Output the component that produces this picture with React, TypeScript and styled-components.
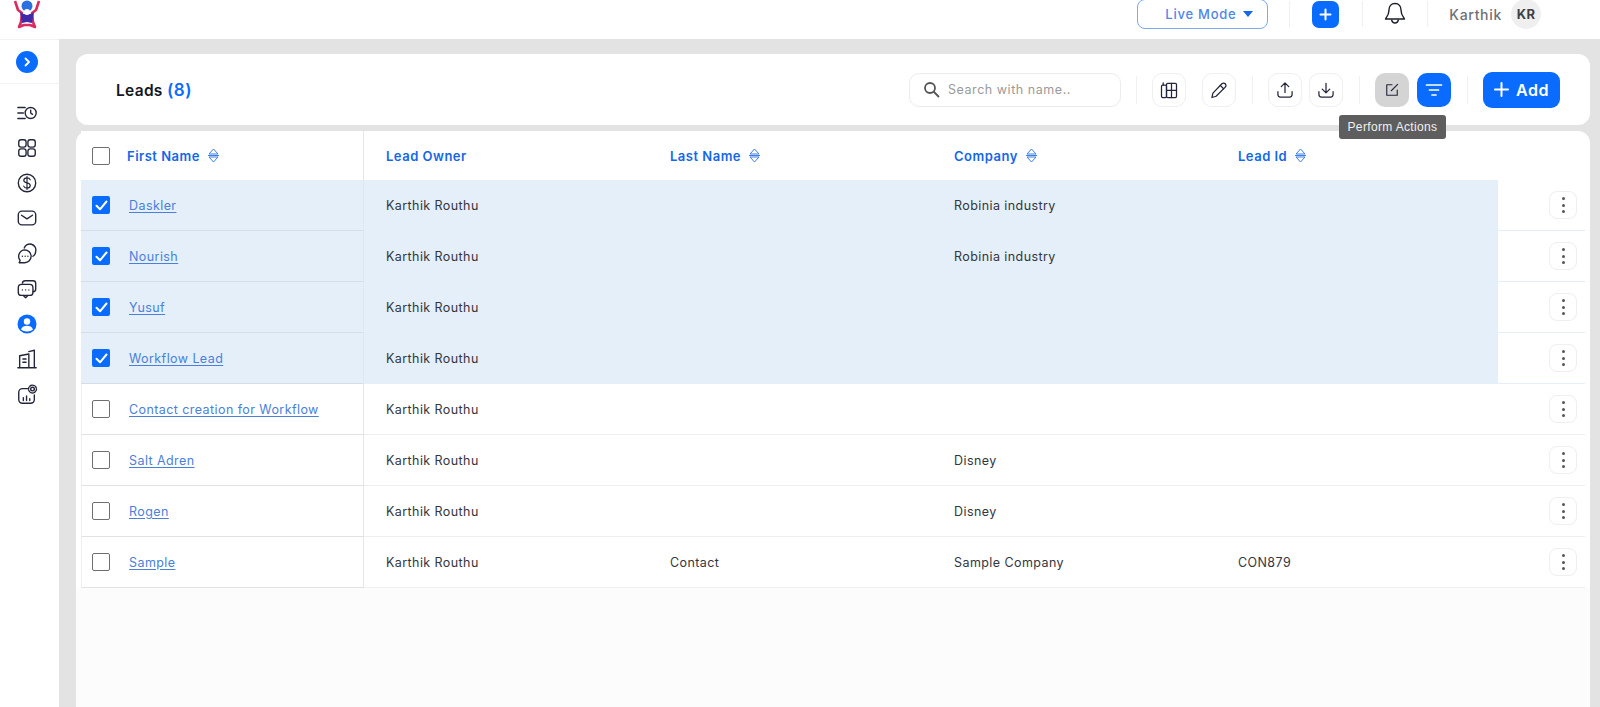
import React from "react";
import styled, { createGlobalStyle } from "styled-components";

const Global = createGlobalStyle`
  html, body { margin: 0; padding: 0; height: 100%; background: #e3e3e3; overflow: hidden; }
  #root { height: 100%; }
  * { box-sizing: border-box; }
  body { font-family: Inter, "Open Sans", sans-serif; }
`;

const Page = styled.div`height: 707px; display: flex; flex-direction: column; overflow: hidden;`;
const TopBar = styled.header`
  height: 39px; flex: none; background: #fff; display: flex; align-items: flex-start;
  padding-right: 59px; overflow: hidden;
`;
const LogoBox = styled.div`width: 59px; height: 28px; display: flex; justify-content: center; padding-right: 5px; margin-top: -1px;`;
const TopRight = styled.div`margin-left: auto; height: 28px; display: flex; align-items: center;`;
const ModeButton = styled.button`
  width: 131px; height: 30px; border: 1px solid #7ea8ef; border-radius: 8px; background: #fff; color: #4f86ea;
  display: flex; align-items: center; font: 500 13px Inter, sans-serif; letter-spacing: .75px; padding: 0 14px 0 27px; justify-content: space-between;
`;
const Caret = styled.span`width: 0; height: 0; border: 5px solid transparent; border-top: 6px solid #1467e8; border-bottom: 0;`;
const TopDivider = styled.span<{ $l: number; $r: number }>`width: 1px; height: 26px; background: #f0f0f0; margin: 0 ${p => p.$r}px 0 ${p => p.$l}px;`;
const SquarePlus = styled.button`
  width: 27px; height: 27px; border: 0; border-radius: 7px; background: #0a6cff; color: #fff; display: flex; align-items: center; justify-content: center; padding: 0;
`;
const UserName = styled.span`font-size: 14px; font-weight: 500; color: #6e7079; letter-spacing: .7px;`;
const Avatar = styled.span`
  width: 30px; height: 30px; border-radius: 50%; background: #efefef; color: #3f3f46; font-size: 13px; font-weight: 700; letter-spacing: .4px;
  display: flex; align-items: center; justify-content: center; margin-left: 9px;
`;
const Body = styled.div`flex: 1; display: flex; min-height: 0;`;
const Side = styled.aside`width: 59px; flex: none; background: #fff; display: flex; flex-direction: column; align-items: stretch; padding-right: 5px; border-top: 1px solid #f2f2f2;`;
const ToggleArea = styled.div`height: 44px; margin-right: -5px; padding-right: 5px; display: flex; align-items: center; justify-content: center; border-bottom: 1px solid #f3f3f3; padding-top: 1px;`;
const Toggle = styled.button`width: 22px; height: 22px; border: 0; padding: 0; border-radius: 50%; background: #0a6cff; display: flex; align-items: center; justify-content: center;`;
const SideNav = styled.nav`display: flex; flex-direction: column; align-items: center; padding-top: 11px;`;
const NavItem = styled.span`height: 35.25px; display: flex; align-items: center; justify-content: center;`;
const Main = styled.main`flex: 1; min-width: 0; padding: 15px 10px 0 17px; display: flex; flex-direction: column; gap: 6px;`;
const HeaderCard = styled.section`
  height: 71px; flex: none; background: #fff; border-radius: 12px; display: flex; align-items: center; padding: 0 30px 0 40px; position: relative;
`;
const Title = styled.h1`margin: 0; font-size: 15.5px; font-weight: 600; color: #14171f; letter-spacing: .3px;`;
const Count = styled.span`color: #0a6cff; font-size: 17px; letter-spacing: .6px;`;
const Tools = styled.div`margin-left: auto; display: flex; align-items: center;`;
const Search = styled.div`
  width: 212px; height: 34px; border: 1px solid #ececec; border-radius: 10px; display: flex; align-items: center; gap: 8px; padding-left: 13px;
  color: #9a9a9a; font-size: 12.5px; letter-spacing: .55px;
`;
const ToolDivider = styled.span<{ $l: number; $r: number }>`width: 1px; height: 28px; background: #f1f1f1; margin: 0 ${p => p.$r}px 0 ${p => p.$l}px;`;
const IconBtn = styled.button<{ $kind?: "gray" | "blue"; $gap?: number }>`
  width: 34px; height: 34px; padding: 0; border-radius: 10px; display: flex; align-items: center; justify-content: center;
  margin-right: ${p => p.$gap ?? 0}px;
  border: 1px solid ${p => (p.$kind ? "transparent" : "#efefef")};
  background: ${p => (p.$kind === "gray" ? "#d4d4d4" : p.$kind === "blue" ? "#0a6cff" : "#fff")};
`;
const AddBtn = styled.button`
  width: 77px; height: 36px; border: 0; border-radius: 9px; background: #0a6cff; color: #fff; font: 600 16px Inter, sans-serif; letter-spacing: .6px;
  display: flex; align-items: center; justify-content: center; gap: 7px; padding: 0;
`;
const Tip = styled.div`
  position: absolute; left: 1263px; top: 61px; width: 107px; height: 24px; border-radius: 3px; background: #5e5e5e; color: #f1f1f1;
  font: 12px "Liberation Sans", sans-serif; letter-spacing: .35px; display: flex; align-items: center; justify-content: center; z-index: 2;
`;
const TableCard = styled.section`flex: 1; background: #fff; border-radius: 12px 12px 0 0; display: flex; flex-direction: column; min-height: 0;`;
const HeadRow = styled.div`height: 49px; display: flex; align-items: stretch; padding-left: 5px;`;
const Row = styled.div<{ $sel?: boolean }>`
  height: 51px; display: flex; align-items: stretch; margin-left: 5px; margin-right: 5px; position: relative;
`;
const FirstCell = styled.div<{ $sel?: boolean; $head?: boolean }>`
  width: 283px; flex: none; display: flex; align-items: center; padding-left: 11px;
  border-right: 1px solid ${p => (p.$sel ? "#dfe8f0" : "#e6e6e6")};
  background: ${p => (p.$sel ? "#e4eff9" : "#fff")};
  border-bottom: ${p => (p.$head ? "0" : `1px solid ${p.$sel ? "#d3dee8" : "#e2e2e2"}`)};
  border-left: ${p => (p.$sel || p.$head ? "0" : "1px solid #f0f0f0")};
  ${p => (!p.$sel && !p.$head ? "padding-left: 10px;" : "")}
`;
const Rest = styled.div<{ $sel?: boolean }>`
  flex: 1; display: flex; align-items: center; position: relative;
  border-bottom: 1px solid ${p => (p.$sel ? "#e4eff9" : "#efefef")};
`;
const Band = styled.div`position: absolute; left: 0; top: 0; bottom: -1px; width: 1134px; background: #e4eff9;`;
const Col = styled.div`width: 284px; flex: none; padding-left: 22px; position: relative; font-size: 12.5px; color: #33363d; letter-spacing: .42px; white-space: nowrap;`;
const HeadCol = styled(Col)`
  display: flex; align-items: center; gap: 8px; color: #1467e8; font-weight: 600; font-size: 13px; letter-spacing: .5px;
`;
const HeadText = styled.span`color: #1467e8; font-weight: 600; font-size: 13px; letter-spacing: .5px; margin-left: 17px; margin-right: 8px;`;
const Box = styled.span<{ $on?: boolean }>`
  width: 18px; height: 18px; flex: none; border-radius: 2px; display: flex; align-items: center; justify-content: center;
  border: ${p => (p.$on ? "0" : "1.5px solid #6f6f6f")}; background: ${p => (p.$on ? "#0a6cff" : "#fff")};
`;
const NameLink = styled.a`margin-left: 19px; color: #4a80dc; font-size: 12.5px; letter-spacing: .42px; text-decoration: underline; text-underline-offset: 2px; white-space: nowrap;`;
const Kebab = styled.button`
  position: absolute; right: 8px; top: 11px; width: 28px; height: 28px; padding: 0; background: #fff; border: 1px solid #efefef; border-radius: 8px;
  display: flex; flex-direction: column; align-items: center; justify-content: center; gap: 3.5px;
`;
const Dot = styled.i`width: 3px; height: 3px; border-radius: 50%; background: #55555c; display: block;`;
const Empty = styled.div`flex: 1; background: #fcfcfc;`;

const S = { fill: "none", stroke: "#23263a", strokeWidth: 1.5, strokeLinecap: "round" as const, strokeLinejoin: "round" as const };

const Logo = () => (
  <svg width="30" height="30" viewBox="0 0 30 30">
    <path d="M3 2l3 9 4 3-1 9-2 5 5-2h6l5 2-2-5-1-9 4-3 3-9" fill="none" stroke="#d92b5f" strokeWidth="2.6" strokeLinejoin="round" />
    <path d="M8 13l3 2h8l3-2-2 11-5-1-5 1z" fill="#3f2aa8" />
    <circle cx="15" cy="7" r="5.5" fill="#2b6fe0" />
    <circle cx="15" cy="13" r="3" fill="#fff" />
  </svg>
);
const I = ({ children, s = 22, v = 24 }: { children: React.ReactNode; s?: number; v?: number }) => (
  <svg width={s} height={s} viewBox={`0 0 ${v} ${v}`} {...S}>{children}</svg>
);
const NavIcons = [
  <I key="a"><path d="M2 6h8M2 12h6M2 18h8" /><circle cx="16" cy="12" r="6" /><path d="M16 9v3l2 1.5" /></I>,
  <I key="b"><rect x="3" y="3" width="8" height="8" rx="2.5" /><rect x="13" y="3" width="8" height="8" rx="2.5" /><rect x="3" y="13" width="8" height="8" rx="2.5" /><rect x="13" y="13" width="8" height="8" rx="2.5" /></I>,
  <I key="c"><circle cx="12" cy="12" r="9.5" /><path d="M15.5 8.5c-.5-1.2-2-2-3.5-2-2 0-3.5 1-3.5 2.7 0 3.6 7 1.8 7 5.4 0 1.7-1.6 2.9-3.5 2.9-1.7 0-3.1-.8-3.6-2.1M12 5v14" strokeWidth="1.3" /></I>,
  <I key="d"><rect x="2.5" y="4.5" width="19" height="15" rx="4" /><path d="M6 9l6 4 6-4" /></I>,
  <I key="e"><path d="M9 5.5A6.5 6.5 0 0 1 21.5 9a6.5 6.5 0 0 1-3 5.5" /><path d="M9.5 7.5a7 7 0 0 1 0 14H3.5l1-2.6A7 7 0 0 1 9.5 7.500z" /><path d="M7 14.500h.01M10 14.500h.01M13 14.500h.01" /></I>,
  <I key="f"><path d="M7 5.500A3 3 0 0 1 10 3h8.500a3 3 0 0 1 3 3v6a3 3 0 0 1-3 3" /><rect x="2.500" y="7" width="16" height="12" rx="3.500" /><path d="M8 19l2.500 2.500 2.500-2.500M7 13h.01M10.500 13h.01M14 13h.01" /></I>,
  <svg key="g" width="20" height="20" viewBox="0 0 20 20"><circle cx="10" cy="10" r="9.500" fill="#0a6cff" /><circle cx="10" cy="7.500" r="3.200" fill="#fff" /><path d="M4 15.500c1-2.800 3.300-3.800 6-3.800s5 1 6 3.800c-3 2.500-9 2.500-12 0z" fill="#fff" /></svg>,
  <I key="h"><path d="M2 21.500h20M4 21V8.500l10-2V21M14 4l6-1.500V21" /><path d="M7.500 12h3.500M7.500 15.500h3.500" /></I>,
  <I key="i"><path d="M13 5H7a4 4 0 0 0-4 4v8a4 4 0 0 0 4 4h9a4 4 0 0 0 4-4v-5" /><path d="M8 18v-3M11.500 18v-5M15 18v-2" /><circle cx="18" cy="5.500" r="2" /><circle cx="18" cy="5.500" r="4.300" strokeDasharray="2 1.300" /></I>,
];
const Check = () => (
  <svg width="13" height="11" viewBox="0 0 13 11"><path d="M1.500 5.800l3.500 3.500 6.500-7.800" fill="none" stroke="#fff" strokeWidth="2" strokeLinecap="round" strokeLinejoin="round" /></svg>
);
const Sort = () => (
  <svg width="11" height="15" viewBox="0 0 11 15" fill="none" stroke="#3f7fe6" strokeWidth="1"><path d="M1 6l4.500-5L10 6zM1 9l4.500 5L10 9z" strokeLinejoin="round" /><path d="M0 7.500h11" /></svg>
);
const rows = [
  { n: "Daskler", c: "Robinia industry", sel: true },
  { n: "Nourish", c: "Robinia industry", sel: true },
  { n: "Yusuf", sel: true },
  { n: "Workflow Lead", sel: true },
  { n: "Contact creation for Workflow" },
  { n: "Salt Adren", c: "Disney" },
  { n: "Rogen", c: "Disney" },
  { n: "Sample", l: "Contact", c: "Sample Company", id: "CON879" },
] as { n: string; l?: string; c?: string; id?: string; sel?: boolean }[];

export default function App() {
  return (
    <Page>
      <Global />
      <TopBar>
        <LogoBox><Logo /></LogoBox>
        <TopRight>
          <ModeButton>Live Mode<Caret /></ModeButton>
          <TopDivider $l={21} $r={22} />
          <SquarePlus><svg width="13" height="13" viewBox="0 0 13 13"><path d="M6.500 1.500v10M1.500 6.500h10" stroke="#fff" strokeWidth="2" strokeLinecap="round" /></svg></SquarePlus>
          <TopDivider $l={23} $r={21} />
          <svg width="22" height="24" viewBox="0 0 22 24" fill="none" stroke="#1e2029" strokeWidth="1.400" strokeLinejoin="round"><path d="M11 1.500c-4 0-6 3-6 6.500 0 5-2.500 7-3.500 9h19c-1-2-3.500-4-3.500-9 0-3.500-2-6.500-6-6.500z" /><path d="M7.500 17.500c.5 2.500 2 3.500 3.500 3.500s3-1 3.500-3.500" /></svg>
          <TopDivider $l={21} $r={21} />
          <UserName>Karthik</UserName>
          <Avatar>KR</Avatar>
        </TopRight>
      </TopBar>
      <Body>
        <Side>
          <ToggleArea><Toggle><svg width="10" height="10" viewBox="0 0 10 10"><path d="M3.500 1.500L7 5 3.500 8.500" fill="none" stroke="#fff" strokeWidth="1.800" strokeLinecap="round" strokeLinejoin="round" /></svg></Toggle></ToggleArea>
          <SideNav>{NavIcons.map((ic, i) => <NavItem key={i}>{ic}</NavItem>)}</SideNav>
        </Side>
        <Main>
          <HeaderCard>
            <Title>Leads <Count>(8)</Count></Title>
            <Tools>
              <Search>
                <svg width="17" height="17" viewBox="0 0 17 17" fill="none" stroke="#555" strokeWidth="1.800" strokeLinecap="round"><circle cx="7" cy="7" r="5" /><path d="M11 11l4.500 4.500" /></svg>
                Search with name..
              </Search>
              <ToolDivider $l={15} $r={15} />
              <IconBtn $gap={16}><I s={20}><rect x="3" y="6" width="6" height="15" rx="1.500" /><rect x="9" y="4" width="12" height="17" rx="1.500" /><path d="M15 4v17M9 12.500h12M5 6V3.500" /></I></IconBtn>
              <IconBtn><I s={20}><path d="M15.500 4.500a2.800 2.800 0 0 1 4 4L8.500 19.500 3.500 21l1.200-5.200z" /><path d="M13.500 6.500l4 4" /></I></IconBtn>
              <ToolDivider $l={16} $r={15} />
              <IconBtn $gap={7}><I s={20}><path d="M12 15V4M7.500 8L12 3.500 16.500 8M3.500 14v3.500a3 3 0 0 0 3 3h11a3 3 0 0 0 3-3V14" /></I></IconBtn>
              <IconBtn><I s={20}><path d="M12 4v11M7.500 11l4.500 4.500L16.500 11M3.500 14v3.500a3 3 0 0 0 3 3h11a3 3 0 0 0 3-3V14" /></I></IconBtn>
              <ToolDivider $l={16} $r={15} />
              <IconBtn $kind="gray" $gap={8}><I s={18}><path d="M12 5H5v14h14v-7" /><path d="M11 13l8.500-8.500" /></I></IconBtn>
              <IconBtn $kind="blue"><svg width="18" height="14" viewBox="0 0 18 14" stroke="#fff" strokeWidth="1.700" strokeLinecap="round"><path d="M1.500 2h15M4.500 7h9M7 12h4" /></svg></IconBtn>
              <ToolDivider $l={16} $r={15} />
              <AddBtn><svg width="15" height="15" viewBox="0 0 15 15"><path d="M7.500 1v13M1 7.500h13" stroke="#fff" strokeWidth="2" strokeLinecap="round" /></svg>Add</AddBtn>
            </Tools>
            <Tip>Perform Actions</Tip>
          </HeaderCard>
          <TableCard>
            <HeadRow>
              <FirstCell $head><Box /><HeadText>First Name</HeadText><Sort /></FirstCell>
              <HeadCol>Lead Owner</HeadCol>
              <HeadCol>Last Name <Sort /></HeadCol>
              <HeadCol>Company <Sort /></HeadCol>
              <HeadCol>Lead Id <Sort /></HeadCol>
            </HeadRow>
            {rows.map(r => (
              <Row key={r.n}>
                <FirstCell $sel={r.sel}>
                  <Box $on={r.sel}>{r.sel && <Check />}</Box>
                  <NameLink>{r.n}</NameLink>
                </FirstCell>
                <Rest $sel={r.sel}>
                  {r.sel && <Band />}
                  <Col>Karthik Routhu</Col>
                  <Col>{r.l}</Col>
                  <Col>{r.c}</Col>
                  <Col>{r.id}</Col>
                  <Kebab><Dot /><Dot /><Dot /></Kebab>
                </Rest>
              </Row>
            ))}
            <Empty />
          </TableCard>
        </Main>
      </Body>
    </Page>
  );
}
